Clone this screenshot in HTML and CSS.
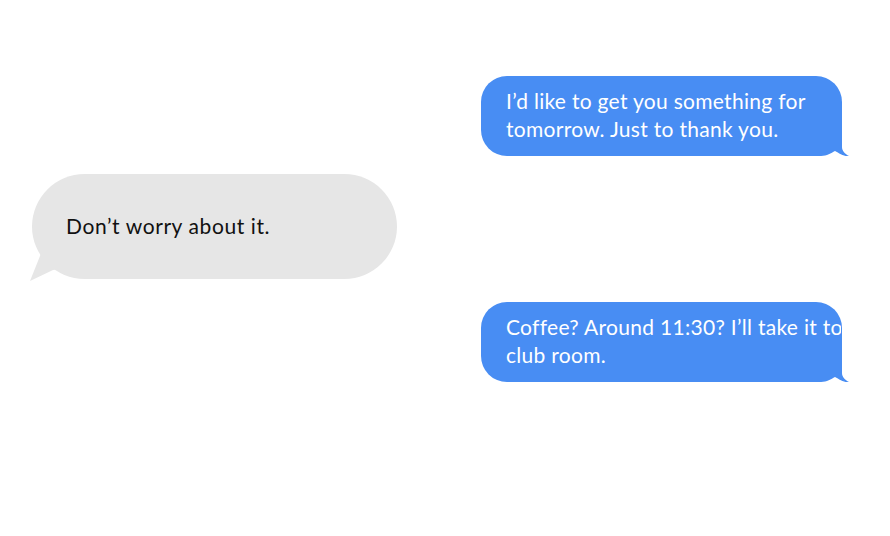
FILE: index.html
```html
<!DOCTYPE html>
<html lang="en">
<head>
    <meta charset="UTF-8">
    <title>Messages</title>
    <link rel="stylesheet" href="styles.css">
</head>
<body>
<div id="chat">
    <div class="msg sent first">
        <div class="bubble"><p>I’d like to get you something for<br>tomorrow. Just to thank you.</p></div>
    </div>
    <div class="msg received">
        <div class="bubble"><p>Don’t worry about it.</p></div>
    </div>
    <div class="msg sent">
        <div class="bubble"><p>Coffee? Around 11:30? I’ll take it to the<br>club room.</p></div>
    </div>
</div>
</body>
</html>
```

FILE: styles.css
```css
* {
    margin: 0;
    padding: 0;
}

body {
    background: #fff;
    font-family: "Lato", "Open Sans", sans-serif;
}

#chat {
    width: 890px;
    height: 536px;
    display: flex;
    flex-direction: column;
}

.msg {
    display: flex;
}

.msg.first {
    margin-top: 76px;
}

.sent {
    justify-content: flex-end;
    padding-right: 48px;
}

.received {
    justify-content: flex-start;
    padding-left: 32px;
    margin-top: 18px;
}

.sent + .received + .sent {
    margin-top: 23px;
}

.bubble {
    position: relative;
    font-size: 21px;
    letter-spacing: 0.3px;
    line-height: 28px;
    box-sizing: border-box;
}

.bubble p {
    position: relative;
    z-index: 1;
}

.sent .bubble {
    width: 361px;
    height: 80px;
    padding: 11px 0 0 25px;
    background: #488df3;
    color: #fff;
    border-radius: 26px;
    white-space: nowrap;
}

.sent .bubble p {
    width: 335px;
    overflow: hidden;
}

.received .bubble {
    width: 365px;
    height: 105px;
    padding: 38px 0 0 34px;
    background: #e6e6e6;
    color: #111;
    border-radius: 53px;
    letter-spacing: 0.6px;
}

/* tails */
.sent .bubble::after {
    content: "";
    position: absolute;
    right: -7px;
    bottom: 0;
    width: 34px;
    height: 26px;
    background: #488df3;
    clip-path: path("M0 0 L27 0 L27 17 C27 21 30 24 34 26 C29 27 24 23 20 21 C16 23 12 26 6 26 L0 26 Z");
}

.received .bubble::after {
    content: "";
    position: absolute;
    left: -2px;
    bottom: -2px;
    width: 30px;
    height: 30px;
    background: #e6e6e6;
    clip-path: polygon(12px 0, 30px 0, 30px 18px, 23px 19px, 0 30px);
}
```
